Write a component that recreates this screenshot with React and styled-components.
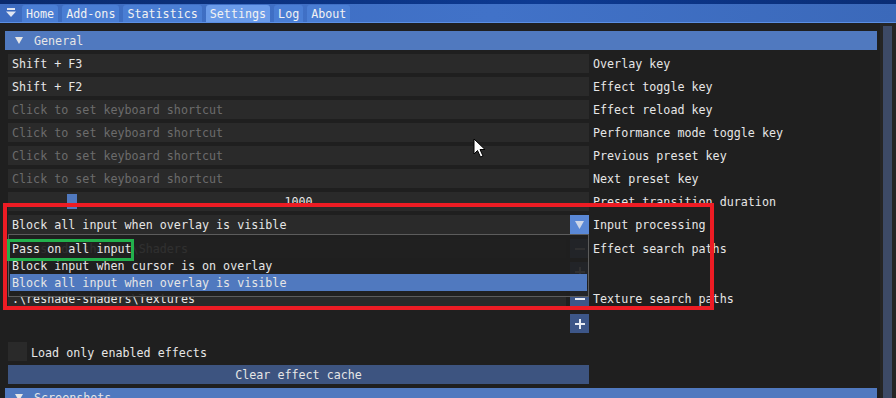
import React from "react";
import styled, { createGlobalStyle } from "styled-components";

const GlobalStyle = createGlobalStyle`
  html, body {
    margin: 0;
    padding: 0;
    overflow: hidden;
    background: #0a2a6c;
  }
  body {
    font-family: "DejaVu Sans Mono", "Liberation Mono", monospace;
    font-size: 11.7px;
    color: #e6e6e6;
  }
`;

const Screen = styled.div`
  position: relative;
  width: 896px;
  height: 398px;
  overflow: hidden;
  display: flex;
  flex-direction: column;
  background: linear-gradient(90deg, #0a2a6c, #0d3a92 60%, #0a2d75);
`;

const TopStrip = styled.div`
  height: 4px;
  flex: none;
`;

const MenuBar = styled.div`
  height: 18px;
  flex: none;
  display: flex;
  align-items: flex-end;
  gap: 4px;
  padding-left: 6px;
  background: linear-gradient(90deg, #3d6cc0, #4172c8 55%, #3b69ba);
  border-bottom: 1px solid #5b8fe4;
`;

const CollapseIcon = styled.svg`
  width: 10px;
  height: 10px;
  margin: 0 2px 4px 0;
  flex: none;
`;

const Tab = styled.div`
  height: 17px;
  box-sizing: border-box;
  padding: 2px 4px 0;
  line-height: 15px;
  border-radius: 3px 3px 0 0;
  background: ${(p) => (p.$active ? "#6a9be9" : "#4a7ed4")};
  color: #f2f2f2;
  white-space: nowrap;
`;

const Body = styled.div`
  flex: 1;
  display: flex;
  min-height: 0;
`;

const Content = styled.div`
  width: 880px;
  flex: none;
  box-sizing: border-box;
  padding: 8px 0 0 5px;
  background: #1f1f1f;
`;

const ScrollTrack = styled.div`
  flex: 1;
  box-sizing: border-box;
  padding: 3px 4px 0 3px;
  background: #252525;
`;

const ScrollGrab = styled.div`
  height: 100%;
  background: #3d4a66;
`;

const Header = styled.div`
  width: 872px;
  height: 19px;
  margin-top: ${(p) => p.$gap ?? 0}px;
  display: flex;
  align-items: center;
  gap: 11px;
  padding-left: 10px;
  box-sizing: border-box;
  background: #5079bf;

  span {
    padding-top: 1px;
  }
`;

const Rows = styled.div`
  margin-left: 3px;
`;

const Row = styled.div`
  display: grid;
  grid-template-columns: ${(p) => (p.$path ? "558px 19px 1fr" : "581px 1fr")};
  column-gap: 4px;
  height: 19px;
  margin-top: ${(p) => p.$gap ?? 4}px;
  align-items: center;
`;

const Frame = styled.div`
  position: relative;
  height: 19px;
  line-height: 17px;
  box-sizing: border-box;
  padding: 2px 0 0 4px;
  background: #2a2a2a;
  color: ${(p) => (p.$muted ? "#6c6c6c" : "#e6e6e6")};
  white-space: nowrap;
`;

const Label = styled.div`
  height: 19px;
  box-sizing: border-box;
  padding-top: 2px;
  line-height: 17px;
  white-space: nowrap;
`;

const SliderFrame = styled(Frame)`
  padding-left: 0;
  text-align: center;
`;

const SliderGrab = styled.div`
  position: absolute;
  top: 2px;
  width: 10px;
  height: 15px;
  background: #5079bf;
`;

const ComboFrame = styled(Frame)`
  display: flex;
  padding: 0;
`;

const ComboText = styled.span`
  flex: 1;
  padding: 2px 0 0 4px;
`;

const ArrowButton = styled.div`
  width: 19px;
  height: 19px;
  display: flex;
  align-items: center;
  justify-content: center;
  background: #5a88d6;
`;

const Popup = styled.div`
  position: absolute;
  top: 19px;
  left: 0;
  right: 0;
  z-index: 2;
  box-sizing: border-box;
  height: 63px;
  padding: 5px 1px;
  border: 1px solid #5c5c5c;
  background: rgba(31, 31, 31, 0.92);
`;

const Item = styled.div`
  height: 17px;
  box-sizing: border-box;
  padding: 1px 0 0 2px;
  line-height: 16px;
  background: ${(p) => (p.$selected ? "#5079bf" : "transparent")};
  color: #e6e6e6;
`;

const SmallButton = styled.div`
  width: 19px;
  height: 19px;
  display: flex;
  align-items: center;
  justify-content: center;
  background: #3d5688;
`;

const CheckRow = styled.div`
  display: flex;
  align-items: center;
  gap: 4px;
  height: 19px;
  margin-top: ${(p) => p.$gap ?? 4}px;

  span {
    padding-top: 2px;
  }
`;

const CheckBox = styled.div`
  width: 19px;
  height: 19px;
  background: #2a2a2a;
`;

const WideButton = styled.div`
  width: 581px;
  height: 19px;
  box-sizing: border-box;
  padding-top: 2px;
  line-height: 17px;
  margin-top: 4px;
  text-align: center;
  background: #3d5480;
`;

const Annotation = styled.div`
  position: absolute;
  left: ${(p) => p.$x}px;
  top: ${(p) => p.$y}px;
  width: ${(p) => p.$w}px;
  height: ${(p) => p.$h}px;
  box-sizing: border-box;
  border: ${(p) => p.$stroke}px solid ${(p) => p.$color};
  z-index: 5;
  pointer-events: none;
`;

const Cursor = styled.svg`
  position: absolute;
  left: 473px;
  top: 138px;
  width: 14px;
  height: 20px;
  z-index: 6;
`;

const Triangle = ({ color = "#e6e6e6", w = 8, h = 7 }) => (
  <svg width={w} height={h} viewBox="0 0 8 7">
    <path d="M0 0 H8 L4 7 Z" fill={color} />
  </svg>
);

const Minus = () => (
  <svg width="10" height="10" viewBox="0 0 10 10">
    <rect x="0" y="4" width="10" height="2" fill="#e8ecf4" />
  </svg>
);

const Plus = () => (
  <svg width="10" height="10" viewBox="0 0 10 10">
    <rect x="0" y="4" width="10" height="2" fill="#e8ecf4" />
    <rect x="4" y="0" width="2" height="10" fill="#e8ecf4" />
  </svg>
);

const tabs = ["Home", "Add-ons", "Statistics", "Settings", "Log", "About"];

const keyRows = [
  { value: "Shift + F3", label: "Overlay key" },
  { value: "Shift + F2", label: "Effect toggle key" },
  { value: "Click to set keyboard shortcut", label: "Effect reload key", muted: true },
  { value: "Click to set keyboard shortcut", label: "Performance mode toggle key", muted: true },
  { value: "Click to set keyboard shortcut", label: "Previous preset key", muted: true },
  { value: "Click to set keyboard shortcut", label: "Next preset key", muted: true },
];

const inputModes = [
  "Pass on all input",
  "Block input when cursor is on overlay",
  "Block all input when overlay is visible",
];

const App = () => {
  const selected = 2;
  return (
    <Screen>
      <GlobalStyle />
      <TopStrip />
      <MenuBar>
        <CollapseIcon viewBox="0 0 10 10">
          <rect x="1" y="0" width="8" height="2" fill="#e0e6f2" />
          <path d="M0 3.5 H10 L5 9 Z" fill="#e0e6f2" />
        </CollapseIcon>
        {tabs.map((t) => (
          <Tab key={t} $active={t === "Settings"}>{t}</Tab>
        ))}
      </MenuBar>
      <Body>
        <Content>
          <Header>
            <Triangle />
            <span>General</span>
          </Header>
          <Rows>
            {keyRows.map((r, i) => (
              <Row key={i}>
                <Frame $muted={r.muted}>{r.value}</Frame>
                <Label>{r.label}</Label>
              </Row>
            ))}
            <Row>
              <SliderFrame>
                <SliderGrab style={{ left: "59px" }} />
                1000
              </SliderFrame>
              <Label>Preset transition duration</Label>
            </Row>
            <Row>
              <ComboFrame>
                <ComboText>{inputModes[selected]}</ComboText>
                <ArrowButton>
                  <Triangle color="#cdd6e8" w={9} h={8} />
                </ArrowButton>
                <Popup>
                  {inputModes.map((m, i) => (
                    <Item key={m} $selected={i === selected}>{m}</Item>
                  ))}
                </Popup>
              </ComboFrame>
              <Label>Input processing</Label>
            </Row>
            <Row $path $gap={5}>
              <Frame>.\reshade-shaders\Shaders</Frame>
              <SmallButton><Minus /></SmallButton>
              <Label>Effect search paths</Label>
            </Row>
            <Row $path>
              <span />
              <SmallButton><Plus /></SmallButton>
            </Row>
            <Row $path $gap={8}>
              <Frame>.\reshade-shaders\Textures</Frame>
              <SmallButton><Minus /></SmallButton>
              <Label>Texture search paths</Label>
            </Row>
            <Row $path $gap={6}>
              <span />
              <SmallButton><Plus /></SmallButton>
            </Row>
            <CheckRow $gap={9}>
              <CheckBox />
              <span>Load only enabled effects</span>
            </CheckRow>
            <WideButton>Clear effect cache</WideButton>
          </Rows>
          <Header $gap={4}>
            <Triangle />
            <span>Screenshots</span>
          </Header>
        </Content>
        <ScrollTrack>
          <ScrollGrab />
        </ScrollTrack>
      </Body>

      <Annotation $x={3} $y={203} $w={711} $h={107} $stroke={4} $color="#ed1c24" />
      <Annotation $x={7} $y={239} $w={127} $h={22} $stroke={3} $color="#22b14c" />

      <Cursor viewBox="0 0 14 20">
        <path
          d="M1 1 L1 16 L4.5 12.5 L7.5 19 L10 18 L7 11.5 L12 11.5 Z"
          fill="#ffffff"
          stroke="#000000"
          strokeWidth="1"
          strokeLinejoin="miter"
        />
      </Cursor>
    </Screen>
  );
};

export default App;
